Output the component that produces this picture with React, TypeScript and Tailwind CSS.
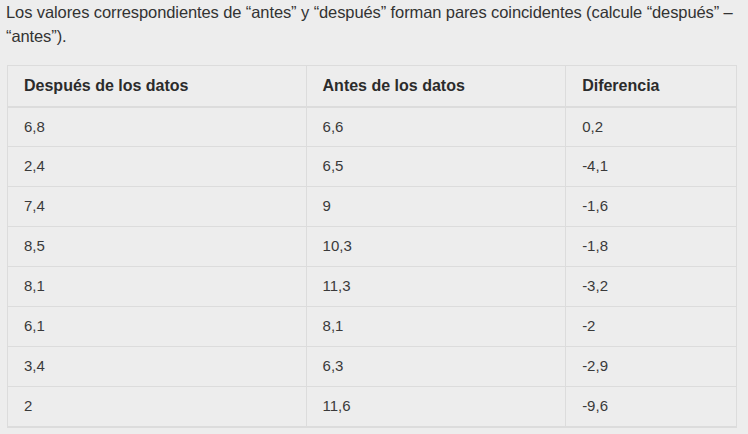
import React from "react";

const rows: [string, string, string][] = [
  ["6,8", "6,6", "0,2"],
  ["2,4", "6,5", "-4,1"],
  ["7,4", "9", "-1,6"],
  ["8,5", "10,3", "-1,8"],
  ["8,1", "11,3", "-3,2"],
  ["6,1", "8,1", "-2"],
  ["3,4", "6,3", "-2,9"],
  ["2", "11,6", "-9,6"],
];

export default function App() {
  return (
    <div
      className="w-[748px] h-[434px] overflow-hidden bg-[#ededed] text-[#333] pl-[6px]"
      style={{ fontFamily: '"Liberation Sans", Arial, sans-serif' }}
    >
      <p className="text-[16.5px] leading-[24px] w-[740px] tracking-[-0.1px]">
        Los valores correspondientes de “antes” y “después” forman pares coincidentes (calcule “después” – “antes”).
      </p>

      <table className="mt-[17px] ml-px w-[730px] border-collapse text-[15px]">
        <colgroup>
          <col className="w-[299px]" />
          <col className="w-[260px]" />
          <col className="w-[171px]" />
        </colgroup>
        <thead>
          <tr className="h-[41px]">
            {["Después de los datos", "Antes de los datos", "Diferencia"].map((h) => (
              <th
                key={h}
                className="border border-[#dcdcdc] border-b-2 px-4 text-left text-[16px] font-bold text-[#2b2b2b] align-middle"
              >
                {h}
              </th>
            ))}
          </tr>
        </thead>
        <tbody>
          {rows.map((r, i) => (
            <tr key={i} className={`h-[40px] ${i === rows.length - 1 ? "border-b-2 border-[#dcdcdc]" : ""}`}>
              {r.map((c, j) => (
                <td key={j} className="border border-[#dcdcdc] px-4 align-middle text-[#3a3a3a]">
                  {c}
                </td>
              ))}
            </tr>
          ))}
        </tbody>
      </table>
    </div>
  );
}
